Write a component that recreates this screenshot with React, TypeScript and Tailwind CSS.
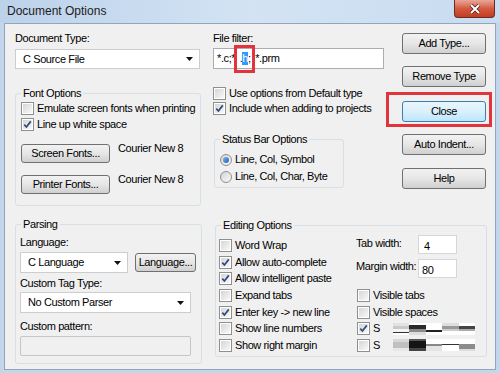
import React from "react"

const ui = "font-['Liberation_Sans',Arial,sans-serif] text-[11px] tracking-[-0.4px] leading-[13px] text-black"

const Check = ({ on, label }: { on?: boolean; label: string }) => (
  <div className="flex items-center h-[13px]">
    <span className="w-[13px] h-[13px] shrink-0 border border-[#8e8f8f] bg-white p-[1px] flex">
      <span className="flex-1 bg-linear-to-br from-[#d6d6d6] to-[#f8f8f8] flex items-center justify-center">
        {on && (
          <svg width="9" height="9" viewBox="0 0 9 9">
            <path d="M1.3 4.6 L3.4 7 L7.8 1.4" fill="none" stroke="#2c4b7e" strokeWidth="1.7" />
          </svg>
        )}
      </span>
    </span>
    <span className="ml-[3px] whitespace-nowrap">{label}</span>
  </div>
)

const Radio = ({ on, label }: { on?: boolean; label: string }) => (
  <div className="flex items-center h-[13px]">
    <span className="w-[12px] h-[12px] shrink-0 rounded-full border border-[#8e8f8f] bg-linear-to-br from-[#d4d4d4] to-[#fafafa] flex items-center justify-center">
      {on && <span className="w-[6px] h-[6px] rounded-full bg-linear-to-br from-[#7fb6ee] to-[#1b5fb4]" />}
    </span>
    <span className="ml-[3px] whitespace-nowrap">{label}</span>
  </div>
)

const Btn = ({ children, cls, def }: { children: React.ReactNode; cls: string; def?: boolean }) => (
  <div
    className={`flex items-center justify-center rounded-[3px] border ${
      def
        ? "border-[#3c7fb1] bg-linear-to-b from-[#eaf6fd] via-[#d9f0fc] to-[#bee6fd]"
        : "border-[#707070] bg-linear-to-b from-[#f2f2f2] via-[#e6e6e6] to-[#d0d0d0]"
    } ${cls}`}
  >
    {children}
  </div>
)

const Combo = ({ text, cls }: { text: string; cls: string }) => (
  <div className={`flex items-center border border-[#cdcdcd] bg-white pl-[7px] pr-[6px] ${cls}`}>
    <span className="flex-1 whitespace-nowrap">{text}</span>
    <svg width="7" height="4" viewBox="0 0 7 4">
      <path d="M0 0H7L3.5 4Z" fill="#111" />
    </svg>
  </div>
)

const Group = ({ title, cls, children }: { title: string; cls: string; children: React.ReactNode }) => (
  <div className={`relative border border-[#d5dfe5] rounded-[3px] ${cls}`}>
    <span className="absolute -top-[7px] left-[5px] bg-[#f0f0f0] px-[2px] whitespace-nowrap">{title}</span>
    {children}
  </div>
)

const bars = [
  [
    ["h-[3px] bg-[#e2e2e2]", "h-[3px] bg-[#c9c9c9]", "h-[3px] bg-[#f4f4f4]", "h-[1px] bg-[#333]", "h-[2px] bg-white"],
    ["h-[2px] bg-white", "h-[4px] bg-[#2a2a2a]", "h-[3px] bg-[#8a8a8a]", "h-[3px] bg-[#dddddd]"],
    ["h-[7px] bg-white", "h-[2px] bg-[#222]", "h-[3px] bg-white"],
    ["h-[3px] bg-[#dedede]", "h-[3px] bg-[#9a9a9a]", "h-[2px] bg-[#cccccc]", "h-[4px] bg-white"],
    ["h-[3px] bg-white", "h-[3px] bg-[#444]", "h-[2px] bg-[#aaaaaa]", "h-[4px] bg-white"],
  ],
  [
    ["h-[3px] bg-[#d8d8d8]", "h-[6px] bg-[#c0c0c0]", "h-[3px] bg-[#e8e8e8]"],
    ["h-[2px] bg-[#555]", "h-[7px] bg-[#141414]", "h-[3px] bg-[#444]"],
    ["h-[5px] bg-white", "h-[2px] bg-[#888]", "h-[5px] bg-[#e4e4e4]"],
    ["h-[5px] bg-white", "h-[1px] bg-[#333]", "h-[6px] bg-white"],
    ["h-[5px] bg-white", "h-[5px] bg-[#8c8c8c]", "h-[2px] bg-[#dddddd]"],
  ],
]

const Bars = ({ rows }: { rows: string[][] }) => (
  <div className="flex w-[82px] h-[12px]">
    {rows.map((seg, i) => (
      <div key={i} className="flex-1 flex flex-col">
        {seg.map((c, j) => (
          <div key={j} className={c} />
        ))}
      </div>
    ))}
  </div>
)

export default function App() {
  return (
    <div className={`relative w-[500px] h-[373px] bg-[#c3d6ec] flex flex-col overflow-hidden ${ui}`}>
      <div className="h-[23px] shrink-0 flex items-start bg-linear-to-r from-[#bcd2ea] via-[#d3e3f4] to-[#c9dcf0]">
        <span className="ml-[7px] mt-[4px] font-['Liberation_Sans',sans-serif] text-[12px] tracking-normal leading-[14px] text-[#1c1c1c]">
          Document Options
        </span>
        <div className="ml-auto mr-[5px] w-[41px] h-[18px] rounded-b-[4px] border border-t-0 border-[#6e2b22] bg-linear-to-b from-[#e8a797] via-[#d35a40] to-[#c23c22] flex items-center justify-center">
          <svg width="12" height="10" viewBox="0 0 12 10">
            <path d="M2 1L10 9M10 1L2 9" stroke="#5a1e16" strokeWidth="3.6" />
            <path d="M2 1L10 9M10 1L2 9" stroke="#ffffff" strokeWidth="2" />
          </svg>
        </div>
      </div>

      <div className="mx-[4px] h-[347px] bg-[#f0f0f0] border border-[#91a5bc]">
        <div className="flex pt-[8px]">
          <div className="ml-[10px] w-[186px] flex flex-col">
            <span>Document Type:</span>
            <Combo text="C Source File" cls="mt-[4px] h-[20px] w-[185px]" />
            <Group title="Font Options" cls="mt-[24px] h-[113px] w-[186px]">
              <div className="pt-[8px] pl-[5px] flex flex-col">
                <Check label="Emulate screen fonts when printing" />
                <div className="mt-[3px]">
                  <Check on label="Line up white space" />
                </div>
                <div className="mt-[13px] flex items-start">
                  <Btn cls="w-[89px] h-[19px]">Screen Fonts...</Btn>
                  <span className="ml-[8px] -mt-[2px]">Courier New 8</span>
                </div>
                <div className="mt-[12px] flex items-start">
                  <Btn cls="w-[89px] h-[19px]">Printer Fonts...</Btn>
                  <span className="ml-[8px] -mt-[2px]">Courier New 8</span>
                </div>
              </div>
            </Group>
          </div>

          <div className="ml-[12px] w-[171px] flex flex-col">
            <span>File filter:</span>
            <div className="mt-[3px] h-[21px] border border-[#abadb3] bg-white flex items-center pl-[3px] whitespace-nowrap">
              <span>*.c;*</span>
              <span className="inline-flex w-[20px] justify-center">
                <span>.</span>
                <span className="bg-[#3399ff] text-white">h</span>
                <span>;</span>
              </span>
              <span>*.prm</span>
            </div>
            <div className="mt-[18px]">
              <Check label="Use options from Default type" />
            </div>
            <div className="mt-[2px]">
              <Check on label="Include when adding to projects" />
            </div>
            <Group title="Status Bar Options" cls="mt-[24px] ml-[1px] w-[130px] h-[49px]">
              <div className="pt-[13px] pl-[5px] flex flex-col">
                <Radio on label="Line, Col, Symbol" />
                <div className="mt-[4px]">
                  <Radio label="Line, Col, Char, Byte" />
                </div>
              </div>
            </Group>
          </div>

          <div className="ml-[18px] w-[84px] flex flex-col">
            <Btn cls="mt-[1px] h-[21px]">Add Type...</Btn>
            <Btn cls="mt-[12px] h-[21px]">Remove Type</Btn>
            <Btn def cls="mt-[14px] h-[21px]">Close</Btn>
            <Btn cls="mt-[12px] h-[21px]">Auto Indent...</Btn>
            <Btn cls="mt-[13px] h-[21px]">Help</Btn>
          </div>
        </div>

        <div className="flex mt-[18px]">
          <Group title="Parsing" cls="ml-[10px] w-[187px] h-[140px]">
            <div className="pt-[11px] pl-[4px] flex flex-col">
              <span>Language:</span>
              <div className="mt-[3px] flex items-start">
                <Combo text="C Language" cls="w-[108px] h-[21px] pl-[4px]" />
                <Btn cls="ml-[7px] mt-[1px] w-[61px] h-[19px]">Language...</Btn>
              </div>
              <span className="mt-[4px]">Custom Tag Type:</span>
              <Combo text="No Custom Parser" cls="mt-[2px] w-[171px] h-[21px] pl-[5px]" />
              <span className="mt-[7px]">Custom pattern:</span>
              <div className="mt-[3px] w-[171px] h-[20px] rounded-[2px] border border-[#c6c6c6] bg-[#f0f0f0]" />
            </div>
          </Group>

          <Group title="Editing Options" cls="ml-[13px] mt-[1px] w-[272px] h-[132px]">
            <div className="flex">
              <div className="w-[140px] pl-[3px] pt-[13px] flex flex-col gap-[3.67px]">
                <Check label="Word Wrap" />
                <Check on label="Allow auto-complete" />
                <Check on label="Allow intelligent paste" />
                <Check label="Expand tabs" />
                <Check on label="Enter key -> new line" />
                <Check label="Show line numbers" />
                <Check label="Show right margin" />
              </div>
              <div className="pt-[9px] flex flex-col">
                <div className="flex items-center">
                  <span className="w-[62px] -mt-[2px] whitespace-nowrap">Tab width:</span>
                  <div className="w-[39px] h-[19px] border border-[#d6d6d6] bg-white pl-[5px] pt-[4px]">4</div>
                </div>
                <div className="mt-[5px] flex items-center">
                  <span className="w-[62px] -mt-[4px] whitespace-nowrap">Margin width:</span>
                  <div className="w-[39px] h-[19px] border border-[#d6d6d6] bg-white pl-[3px] pt-[4px]">80</div>
                </div>
                <div className="mt-[11px] ml-[1px] flex flex-col gap-[3.67px]">
                  <Check label="Visible tabs" />
                  <Check label="Visible spaces" />
                  <div className="flex items-center">
                    <div className="w-[36px]">
                      <Check on label="S" />
                    </div>
                    <Bars rows={bars[0]} />
                  </div>
                  <div className="flex items-center">
                    <div className="w-[36px]">
                      <Check label="S" />
                    </div>
                    <Bars rows={bars[1]} />
                  </div>
                </div>
              </div>
            </div>
          </Group>
        </div>
      </div>

      <div className="absolute left-[234px] top-[45px] w-[21px] h-[28px] border-[3px] border-[#e2343c]" />
      <div className="absolute left-[386px] top-[92px] w-[106px] h-[35px] border-[3px] border-[#e2343c]" />
    </div>
  )
}
